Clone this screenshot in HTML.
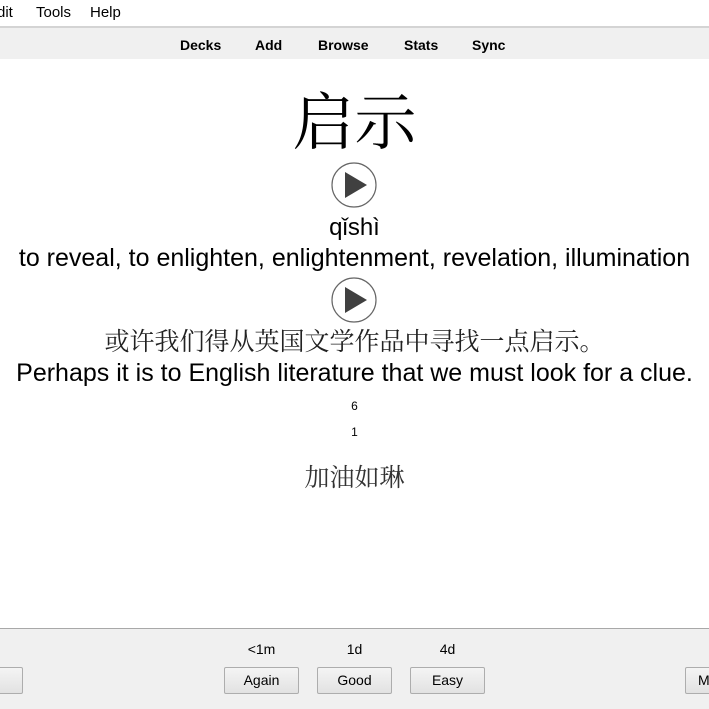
<!DOCTYPE html>
<html><head><meta charset="utf-8"><style>
*{margin:0;padding:0;box-sizing:border-box}
body{width:709px;height:709px;overflow:hidden;background:#fff;position:relative;font-family:"Liberation Sans",sans-serif;color:#000}
.abs{position:absolute;white-space:nowrap}
.c{left:0;width:709px;text-align:center}
.menu{top:4px;font-size:15px;color:#000}
.tb{position:absolute;top:26px;left:0;width:709px;height:33px;background:#f0f0f0;border-top:2px solid #d4d4d4}
.tb span{position:absolute;top:9px;font-size:14px;font-weight:bold}
.serif{font-family:"Liberation Serif","Noto Serif CJK SC",serif}
.play{position:absolute;left:331px;width:46px;height:46px}
.bot{position:absolute;top:628px;left:0;width:709px;height:81px;background:#f0f0f0;border-top:1px solid #a8a8a8}
.btn{position:absolute;top:38px;height:27px;background:linear-gradient(#f4f4f4,#e2e2e2);border:1px solid #adadad;border-radius:2px;font-size:14px;text-align:center;line-height:25px}
.lbl{position:absolute;top:12px;font-size:14px;width:75px;text-align:center}
</style></head><body>
<div class="abs menu" style="left:-3px">dit</div>
<div class="abs menu" style="left:36px">Tools</div>
<div class="abs menu" style="left:90px">Help</div>
<div class="tb">
<span style="left:180px">Decks</span>
<span style="left:255px">Add</span>
<span style="left:318px">Browse</span>
<span style="left:404px">Stats</span>
<span style="left:472px">Sync</span>
</div>
<div class="abs c serif" style="top:84px;font-size:62px;line-height:80px">启示</div>
<svg class="play" style="top:162px" viewBox="0 0 46 46"><circle cx="23" cy="23" r="22" fill="#fff" stroke="#666" stroke-width="1.2"/><path d="M14 10 L36 23 L14 36 Z" fill="#404040"/></svg>
<div class="abs c" style="top:213px;font-size:24px;line-height:30px">qǐshì</div>
<div class="abs c" style="top:243px;font-size:25px;line-height:30px">to reveal, to enlighten, enlightenment, revelation, illumination</div>
<svg class="play" style="top:277px" viewBox="0 0 46 46"><circle cx="23" cy="23" r="22" fill="#fff" stroke="#666" stroke-width="1.2"/><path d="M14 10 L36 23 L14 36 Z" fill="#404040"/></svg>
<div class="abs c serif" style="top:327px;font-size:25px;line-height:32px;color:#222">或许我们得从英国文学作品中寻找一点启示。</div>
<div class="abs c" style="top:358px;font-size:25px;line-height:30px">Perhaps it is to English literature that we must look for a clue.</div>
<div class="abs c" style="top:399px;font-size:12px">6</div>
<div class="abs c" style="top:425px;font-size:12px">1</div>
<div class="abs c serif" style="top:464px;font-size:25px;line-height:30px;color:#333">加油如琳</div>
<div class="bot">
<div class="lbl" style="left:224px">&lt;1m</div>
<div class="lbl" style="left:317px">1d</div>
<div class="lbl" style="left:410px">4d</div>
<div class="btn" style="left:-10px;width:33px"></div>
<div class="btn" style="left:224px;width:75px">Again</div>
<div class="btn" style="left:317px;width:75px">Good</div>
<div class="btn" style="left:410px;width:75px">Easy</div>
<div class="btn" style="left:685px;width:40px;text-align:left;padding-left:12px">M</div>
</div>
</body></html>
